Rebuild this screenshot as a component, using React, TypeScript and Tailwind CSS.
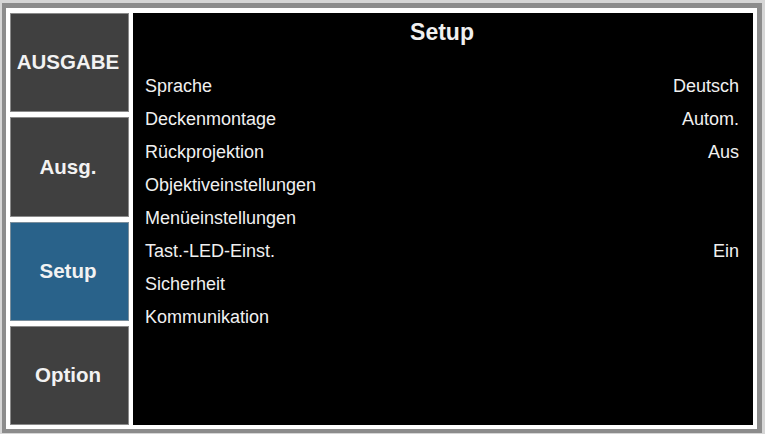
import React from "react";

const tabs = [
  { label: "AUSGABE", active: false },
  { label: "Ausg.", active: false },
  { label: "Setup", active: true },
  { label: "Option", active: false },
];

const rows: { name: string; value?: string }[] = [
  { name: "Sprache", value: "Deutsch" },
  { name: "Deckenmontage", value: "Autom." },
  { name: "Rückprojektion", value: "Aus" },
  { name: "Objektiveinstellungen" },
  { name: "Menüeinstellungen" },
  { name: "Tast.-LED-Einst.", value: "Ein" },
  { name: "Sicherheit" },
  { name: "Kommunikation" },
];

export default function App() {
  return (
    <div
      className="w-[765px] h-[434px] bg-[#d6d6d6] pt-[3px] pl-[2px] pr-[3px] pb-[1px]"
      style={{ fontFamily: '"Liberation Sans", Arial, sans-serif' }}
    >
      <div className="h-full border-[#8c8c8c] border-t-[5px] border-l-4 border-r-[5px] border-b-4 bg-white pt-[5px] pl-[4px] pr-[4px] pb-[4px] flex gap-[4px]">
        {/* menu tabs */}
        <div className="w-[119px] flex flex-col gap-[5px]">
          {tabs.map((t) => (
            <div
              key={t.label}
              className={
                t.active
                  ? "flex-1 flex items-center justify-center pr-[3px] border border-[#7a8e9c] bg-[#29628a] text-[20.5px] font-bold text-[#f2f2f2]"
                  : "flex-1 flex items-center justify-center pr-[3px] border border-[#8a8a8a] bg-[#404040] text-[20.5px] font-bold text-[#f2f2f2]"
              }
            >
              {t.label}
            </div>
          ))}
        </div>
        {/* settings page */}
        <div className="flex-1 bg-black text-[#f0f0f0] pt-[5px] pl-[12px] pr-[14px]">
          <div className="text-center text-[23px] font-bold leading-[28px]">Setup</div>
          <div className="mt-[24px] flex flex-col">
            {rows.map((r) => (
              <div key={r.name} className="h-[33px] flex items-center justify-between text-[18px]">
                <span>{r.name}</span>
                {r.value && <span>{r.value}</span>}
              </div>
            ))}
          </div>
        </div>
      </div>
    </div>
  );
}
